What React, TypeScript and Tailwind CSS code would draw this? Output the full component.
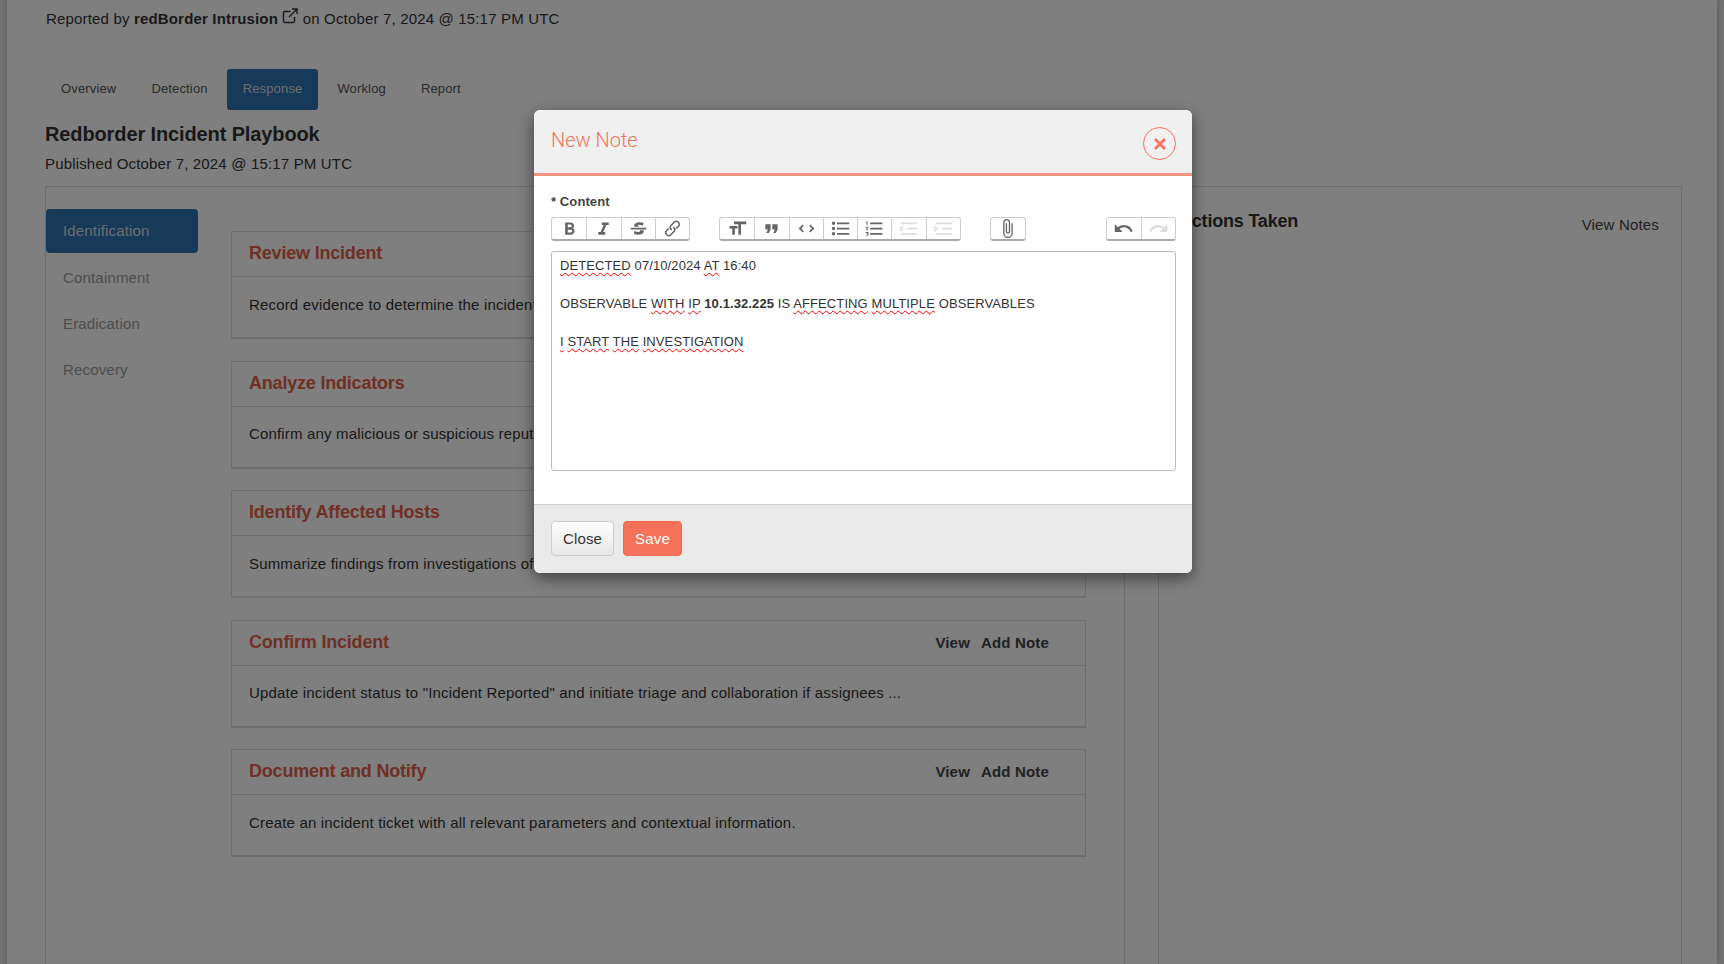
import React from "react";

const Icon = ({ d, off = false, size = 21 }: { d: string; off?: boolean; size?: number }) => (
  <svg width={size} height={size} viewBox="0 0 24 24" className={off ? "opacity-[0.13]" : "opacity-60"}>
    <path d={d} fill="#000" />
  </svg>
);

const P = {
  bold: "M15.6 11.8c1-.7 1.6-1.8 1.6-2.8a4 4 0 0 0-4-4H7v14h7c2.1 0 3.7-1.7 3.7-3.8 0-1.5-.8-2.8-2.1-3.4zM10 7.5h3a1.5 1.5 0 1 1 0 3h-3v-3zm3.5 9H10v-3h3.5a1.5 1.5 0 1 1 0 3z",
  italic: "M10 5v3h2.2l-3.4 8H6v3h8v-3h-2.2l3.4-8H18V5h-8z",
  strike: "M12.73 14l.28.14c.26.15.45.3.57.44.12.14.18.3.18.5 0 .3-.15.56-.44.75-.3.2-.76.3-1.39.3A13.52 13.52 0 0 1 7 14.95v3.37a10.64 10.64 0 0 0 4.84.88c1.26 0 2.35-.19 3.28-.56.93-.37 1.64-.9 2.14-1.57s.74-1.45.74-2.32c0-.26-.02-.51-.06-.75h-5.21zm-5.5-4c-.08-.34-.12-.7-.12-1.1 0-1.29.52-2.3 1.58-3.02 1.05-.72 2.5-1.08 4.34-1.08 1.62 0 3.28.34 4.97 1l-1.3 2.93c-1.47-.6-2.73-.9-3.8-.9-.55 0-.96.08-1.2.26-.26.17-.38.38-.38.64 0 .27.16.52.48.74.17.12.53.3 1.05.53H7.23zM3 13h18v-2H3v2z",
  link: "M9.88 13.7a4.3 4.3 0 0 1 0-6.07l3.37-3.37a4.26 4.26 0 0 1 6.07 0 4.3 4.3 0 0 1 0 6.06l-1.96 1.72a.91.91 0 1 1-1.3-1.3l1.97-1.71a2.46 2.46 0 0 0-3.48-3.48l-3.38 3.37a2.46 2.46 0 0 0 0 3.48.91.91 0 1 1-1.3 1.3zm4.24-3.4a4.3 4.3 0 0 1 0 6.07l-3.37 3.37a4.26 4.26 0 0 1-6.07 0 4.3 4.3 0 0 1 0-6.06l1.96-1.72a.91.91 0 1 1 1.3 1.3l-1.97 1.71a2.46 2.46 0 0 0 3.48 3.48l3.38-3.37a2.46 2.46 0 0 0 0-3.48.91.91 0 1 1 1.3-1.3z",
  heading: "M12 9v3H9v7H6v-7H3V9h9zM8 4h14v3h-6v12h-3V7H8V4z",
  quote: "M6 17h3l2-4V7H5v6h3zm8 0h3l2-4V7h-6v6h3z",
  code: "M18.2 12L15 15.2l1.4 1.4L21 12l-4.6-4.6L15 8.8l3.2 3.2zM5.8 12L9 8.8 7.6 7.4 3 12l4.6 4.6L9 15.2 5.8 12z",
  bullets: "M4 4a2 2 0 1 0 0 4 2 2 0 0 0 0-4zm0 6a2 2 0 1 0 0 4 2 2 0 0 0 0-4zm0 6a2 2 0 1 0 0 4 2 2 0 0 0 0-4zm4 3h14v-2H8v2zm0-6h14v-2H8v2zm0-8v2h14V5H8z",
  numbers: "M2 17h2v.5H3v1h1v.5H2v1h3v-4H2v1zm1-9h1V4H2v1h1v3zm-1 3h1.8L2 13.1v.9h3v-1H3.2L5 10.9V10H2v1zm5-6v2h14V5H7zm0 14h14v-2H7v2zm0-6h14v-2H7v2z",
  dec: "M3 19h19v-2H3v2zm7-6h12v-2H10v2zm-8.3-.3l2.8 2.9L6 14.2 4 12l2-2-1.4-1.5L1 12l.7.7zM3 5v2h19V5H3z",
  inc: "M3 19h19v-2H3v2zm7-6h12v-2H10v2zm-6.9-1L1 14.2l1.4 1.4L6 12l-.7-.7-2.8-2.8L1 9.9 3.1 12zM3 5v2h19V5H3z",
  attach: "M16.5 6v11.5a4 4 0 1 1-8 0V5a2.5 2.5 0 0 1 5 0v10.5a1 1 0 1 1-2 0V6H10v9.5a2.5 2.5 0 0 0 5 0V5a4 4 0 1 0-8 0v12.5a5.5 5.5 0 0 0 11 0V6h-1.5z",
  undo: "M12.5 8c-2.6 0-5 1-6.9 2.6L2 7v9h9l-3.6-3.6A8 8 0 0 1 20 16l2.4-.8a10.5 10.5 0 0 0-10-7.2z",
  redo: "M18.4 10.6a10.5 10.5 0 0 0-16.9 4.6L4 16a8 8 0 0 1 12.7-3.6L13 16h9V7l-3.6 3.6z",
};

const Group = ({ items, className = "" }: { items: { d: string; off?: boolean }[]; className?: string }) => (
  <div className={`flex h-[24px] rounded-[3px] border border-[#ccc] border-b-2 border-b-[#aaa] bg-white ${className}`}>
    {items.map((it, i) => (
      <div key={i} className={`flex h-full w-[34.25px] items-center justify-center pb-[1px] ${i ? "border-l border-[#ccc]" : ""}`}>
        <Icon d={it.d} off={it.off} />
      </div>
    ))}
  </div>
);

const W = ({ children }: { children: React.ReactNode }) => (
  <span className="underline decoration-wavy decoration-[#f00] decoration-1 underline-offset-2">{children}</span>
);

const cards = [
  ["Review Incident", "Record evidence to determine the incident's scope and impact on the organization and its assets."],
  ["Analyze Indicators", "Confirm any malicious or suspicious reputation of observables through threat intelligence enrichment."],
  ["Identify Affected Hosts", "Summarize findings from investigations of the affected hosts and related observables in the incident."],
  ["Confirm Incident", 'Update incident status to "Incident Reported" and initiate triage and collaboration if assignees ...'],
  ["Document and Notify", "Create an incident ticket with all relevant parameters and contextual information."],
];

export default function App() {
  return (
    <div className="relative h-[964px] overflow-hidden bg-[#e4e4e4] font-['Liberation_Sans',Arial,sans-serif] text-[15px] tracking-[0.17px] text-[#333]">
      <div className="mx-[7px] h-[964px] overflow-hidden bg-white shadow-[0_0_5px_rgba(0,0,0,0.25)]">
        <div className="pl-[39px] pt-[8px] leading-[20px]">
          <span>Reported by </span>
          <b>redBorder Intrusion</b>{" "}
          <svg width="16" height="16" viewBox="0 0 16 16" fill="none" stroke="#333" strokeWidth="1.4" className="inline-block align-[0px]">
            <path d="M8.5 3.5H2.8A1.3 1.3 0 0 0 1.5 4.8v8.4a1.3 1.3 0 0 0 1.3 1.3h8.4a1.3 1.3 0 0 0 1.3-1.3V9" />
            <path d="M10 1h5v5M15 1 7 9" />
          </svg>{" "}
          <span>on October 7, 2024 @ 15:17 PM UTC</span>
        </div>

        <div className="ml-[38px] mt-[40px] flex gap-[3px] text-[13px] tracking-[0.15px]">
          {["Overview", "Detection", "Response", "Worklog", "Report"].map((t) => (
            <div
              key={t}
              className={`flex h-[41px] items-center rounded-[3px] px-[16px] pb-[2px] ${t === "Response" ? "bg-[#2e74b3] text-[#ddd]" : "text-[#555]"}`}
            >
              {t}
            </div>
          ))}
        </div>

        <div className="ml-[38px] mt-[11px] text-[20px] font-bold leading-[26px] tracking-[-0.12px] text-[#333]">Redborder Incident Playbook</div>
        <div className="ml-[38px] mt-[7px] leading-[20px]">Published October 7, 2024 @ 15:17 PM UTC</div>

        <div className="ml-[38px] mt-[12px] flex items-start gap-[33px]">
          <div className="flex h-[800px] w-[1080px] shrink-0 border border-[#ddd]">
            <div className="w-[152px] shrink-0 pt-[22px] text-[15px]">
              <div className="flex h-[44px] items-center rounded-[4px] bg-[#2e74b3] pl-[17px] text-[#ddd]">Identification</div>
              <div className="pt-[1px]">
                {["Containment", "Eradication", "Recovery"].map((t) => (
                  <div key={t} className="mt-[2px] flex h-[44px] items-center pl-[17px] text-[#999]">{t}</div>
                ))}
              </div>
            </div>
            <div className="ml-[33px] w-[855px] shrink-0 pt-[44px]">
              {cards.map(([title, text]) => (
                <div key={title} className="mb-[21.5px] h-[108px] border border-[#ddd] border-b-2">
                  <div className="flex h-[45px] items-center justify-between border-b border-[#ddd] pb-[1px] pl-[17px] pr-[36px]">
                    <span className="text-[18px] font-bold tracking-[-0.2px] text-[#e0604a]">{title}</span>
                    <span className="flex gap-[11px] pt-[2px] font-bold text-[#444]">
                      <span>View</span>
                      <span>Add Note</span>
                    </span>
                  </div>
                  <div className="pl-[17px] pt-[17.5px] leading-[20px]">{text}</div>
                </div>
              ))}
            </div>
          </div>
          <div className="flex h-[800px] w-[524px] shrink-0 items-start justify-between border border-[#ddd] pl-[20px] pr-[22px] pt-[23px]">
            <span className="text-[18px] font-bold leading-[22px] tracking-[-0.2px]">Actions Taken</span>
            <span className="pt-[5px] leading-[20px] text-[#444]">View Notes</span>
          </div>
        </div>
      </div>

      <div className="absolute inset-0 bg-black/50" />

      <div className="absolute left-[534px] top-[110px] w-[658px] overflow-hidden rounded-[6px] bg-white shadow-[0_5px_15px_rgba(0,0,0,0.5)]">
        <div className="flex h-[66px] items-start justify-between border-b-[3px] border-[#f4917f] bg-[#f0f0f0] pl-[17px] pr-[16px]">
          <span className="pt-[18px] font-['Roboto',sans-serif] text-[20px] font-light leading-[24px] tracking-normal text-[#f4725a]">New Note</span>
          <div className="mt-[17px] flex h-[33px] w-[33px] items-center justify-center rounded-full border border-[#f4725a]">
            <svg width="12" height="12" viewBox="0 0 12 12" stroke="#f4725a" strokeWidth="2.8">
              <path d="M1 1l10 10M11 1L1 11" />
            </svg>
          </div>
        </div>

        <div className="h-[328px] pl-[17px] pr-[16px] pt-[18px]">
          <div className="text-[13px] font-bold leading-[16px] tracking-[0.1px] text-[#444]">* Content</div>
          <div className="mt-[7px] flex items-start justify-between">
            <div className="flex">
              <Group items={[{ d: P.bold }, { d: P.italic }, { d: P.strike }, { d: P.link }]} />
              <Group
                className="ml-[29px]"
                items={[{ d: P.heading }, { d: P.quote }, { d: P.code }, { d: P.bullets }, { d: P.numbers }, { d: P.dec, off: true }, { d: P.inc, off: true }]}
              />
              <Group className="ml-[29px]" items={[{ d: P.attach }]} />
            </div>
            <Group items={[{ d: P.undo }, { d: P.redo, off: true }]} />
          </div>
          <div className="mt-[10px] h-[220px] rounded-[3px] border border-[#bbb] px-[8px] pt-[4px] text-[13px] leading-[19px] tracking-[0.1px] text-[#333]">
            <div>
              <W>DETECTED</W> 07/10/2024 <W>AT</W> 16:40
            </div>
            <div className="h-[19px]" />
            <div>
              OBSERVABLE <W>WITH</W> <W>IP</W> <b>10.1.32.225</b> IS <W>AFFECTING</W> <W>MULTIPLE</W> OBSERVABLES
            </div>
            <div className="h-[19px]" />
            <div>
              <W>I</W> <W>START</W> <W>THE</W> <W>INVESTIGATION</W>
            </div>
          </div>
        </div>

        <div className="flex h-[69px] items-start gap-[9px] border-t border-[#ccc] bg-[#e9e9e9] pl-[17px] pt-[16px]">
          <div className="flex h-[35px] w-[63px] items-center justify-center rounded-[4px] border border-[#ccc] bg-gradient-to-b from-white to-[#e6e6e6] pt-[1px] text-[15px] text-[#333]">Close</div>
          <div className="flex h-[35px] w-[59px] items-center justify-center rounded-[4px] border border-[#ee6a52] bg-[#f4725a] pt-[1px] text-[15px] text-white">Save</div>
        </div>
      </div>
    </div>
  );
}
